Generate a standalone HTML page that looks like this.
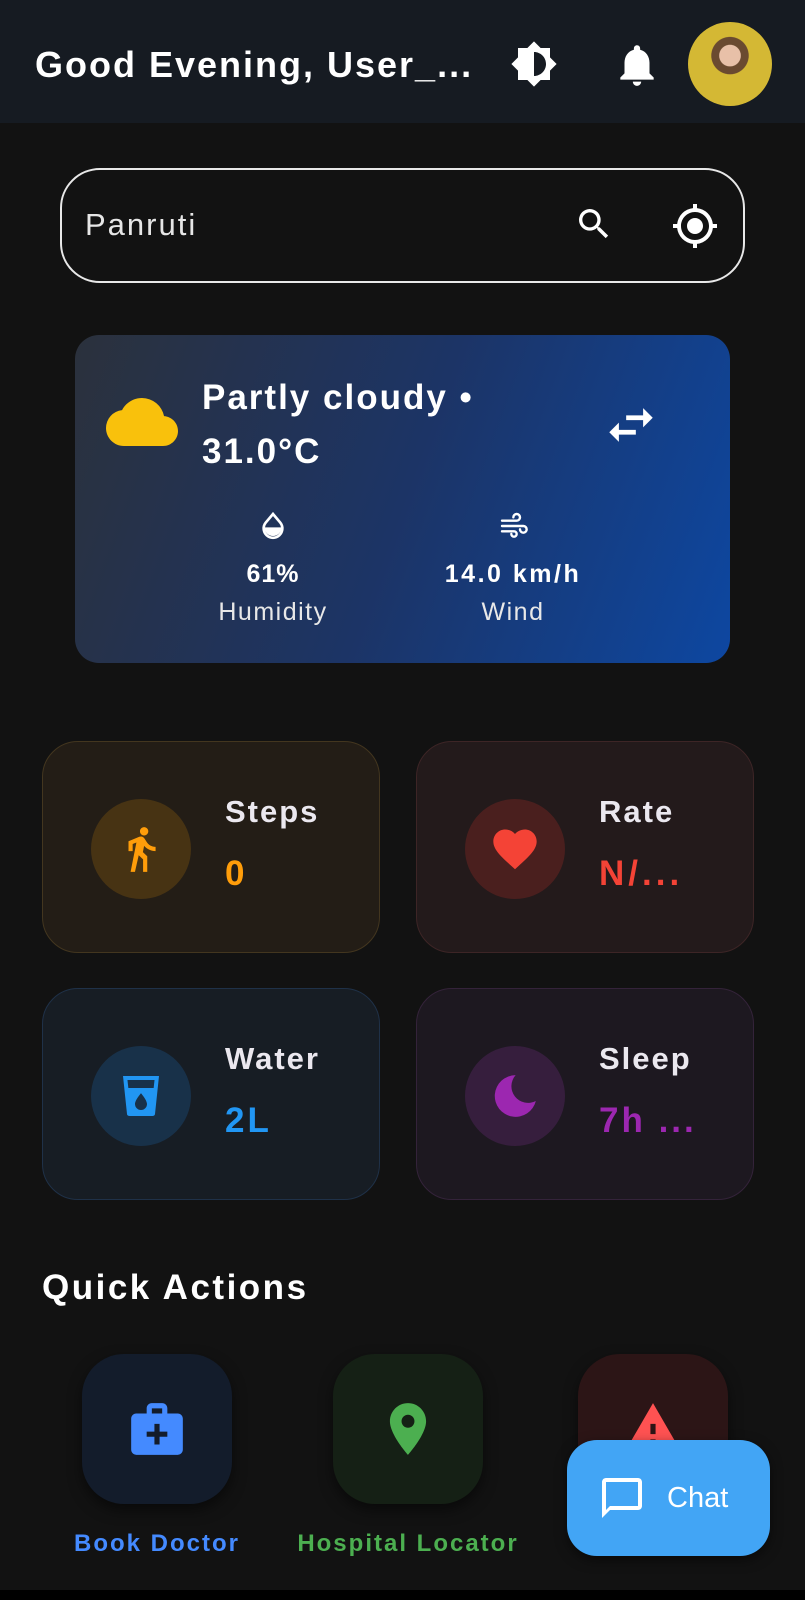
<!DOCTYPE html>
<html><head><meta charset="utf-8"><style>
*{margin:0;padding:0;box-sizing:border-box}
body{width:805px;height:1600px;background:#121212;position:relative;overflow:hidden;font-family:"Liberation Sans",sans-serif;color:#fff}
.abs{position:absolute}
.hdr{left:0;top:0;width:805px;height:123px;background:#161b22}
.title{left:35px;top:44px;font-size:36px;font-weight:bold;letter-spacing:2px;white-space:nowrap}
.search{left:60px;top:168px;width:685px;height:115px;border:2px solid #e8e8e8;border-radius:40px}
.wc{left:75px;top:335px;width:655px;height:328px;border-radius:24px;background:linear-gradient(110deg,#2b313c 0%,#1c3466 50%,#0d47a1 100%)}
.card{width:338px;height:212px;border-radius:36px}
.circ{width:100px;height:100px;border-radius:50%;left:48px;top:57px;display:flex;align-items:center;justify-content:center}
.lbl{left:182px;top:52px;font-size:31px;font-weight:bold;color:#ebe8ef;letter-spacing:2px}
.val{left:182px;top:112px;font-size:35px;font-weight:bold;letter-spacing:3px}
.tile{width:150px;height:150px;border-radius:42px;top:1354px;display:flex;align-items:center;justify-content:center;box-shadow:0 6px 14px rgba(0,0,0,.5)}
.ql{top:1530px;font-size:24px;font-weight:bold;text-align:center;letter-spacing:2px;white-space:nowrap}
</style></head><body>
<div class="abs hdr"></div>
<div class="abs title">Good Evening, User_...</div>
<svg class="abs" style="left:510px;top:40px" width="48" height="48" viewBox="0 0 24 24"><path fill="#fff" d="M20 8.69V4h-4.69L12 .69 8.69 4H4v4.69L.69 12 4 15.31V20h4.69L12 23.31 15.31 20H20v-4.69L23.31 12 20 8.69zM12 18V6c3.31 0 6 2.69 6 6s-2.69 6-6 6z"/></svg>
<svg class="abs" style="left:612px;top:40px" width="50" height="50" viewBox="0 0 24 24"><path fill="#fff" d="M12 22c1.1 0 2-.9 2-2h-4c0 1.1.9 2 2 2zm6-6v-5c0-3.07-1.63-5.64-4.5-6.32V4c0-.83-.67-1.5-1.5-1.5s-1.5.67-1.5 1.5v.68C7.64 5.36 6 7.92 6 11v5l-2 2v1h16v-1l-2-2z"/></svg>
<div class="abs" style="left:688px;top:22px;width:84px;height:84px;border-radius:50%;background:radial-gradient(circle at 50% 40%,#e8c0a8 0 16%,#6a4a30 17% 28%,#d4b834 29%)"></div>

<div class="abs search"></div>
<div class="abs" style="left:85px;top:207px;font-size:31px;color:#e6e6e6;letter-spacing:2px">Panruti</div>
<svg class="abs" style="left:574px;top:204px" width="40" height="40" viewBox="0 0 24 24"><path fill="#fff" d="M15.5 14h-.79l-.28-.27A6.47 6.47 0 0016 9.5 6.5 6.5 0 109.5 16c1.61 0 3.09-.59 4.23-1.57l.27.28v.79l5 4.99L20.49 19l-4.99-5zm-6 0C7.01 14 5 11.99 5 9.5S7.01 5 9.5 5 14 7.01 14 9.5 11.99 14 9.5 14z"/></svg>
<svg class="abs" style="left:671px;top:202px" width="48" height="48" viewBox="0 0 24 24"><path fill="#fff" d="M12 8c-2.21 0-4 1.79-4 4s1.79 4 4 4 4-1.79 4-4-1.79-4-4-4zm8.94 3A8.99 8.99 0 0013 3.06V1h-2v2.06A8.99 8.99 0 003.06 11H1v2h2.06A8.99 8.99 0 0011 20.94V23h2v-2.06A8.99 8.99 0 0020.94 13H23v-2h-2.06zM12 19c-3.87 0-7-3.13-7-7s3.13-7 7-7 7 3.13 7 7-3.13 7-7 7z"/></svg>

<div class="abs wc"></div>
<svg class="abs" style="left:106px;top:392px" width="72" height="60" viewBox="0 0 24 20"><path fill="#f9c10c" d="M19.35 8.04A7.49 7.49 0 0012 2C9.11 2 6.6 3.64 5.35 6.04A5.994 5.994 0 000 12c0 3.31 2.69 6 6 6h13c2.76 0 5-2.24 5-5 0-2.64-2.05-4.78-4.65-4.96z"/></svg>
<div class="abs" style="left:202px;top:371px;font-size:35px;font-weight:bold;line-height:54px;letter-spacing:2px">Partly cloudy •<br>31.0°C</div>
<svg class="abs" style="left:602px;top:396px" width="58" height="58" viewBox="0 0 24 24"><path fill="#fff" d="M6.99 11L3 15l3.99 4v-3H14v-2H6.99v-3zM21 9l-3.99-4v3H10v2h7.01v3L21 9z"/></svg>
<svg class="abs" style="left:257px;top:510px" width="32" height="32" viewBox="0 0 24 24"><path fill="none" stroke="#fff" stroke-width="2" d="M12 3L6.5 9.5a7 7 0 1011 0z"/><path fill="#fff" d="M5.5 13h13a6.5 6.5 0 01-13 0z"/></svg>
<svg class="abs" style="left:496px;top:510px" width="36" height="32" viewBox="0 0 24 24"><path fill="none" stroke="#fff" stroke-width="1.8" stroke-linecap="round" d="M3 8h11a2.5 2.5 0 10-2.5-2.5M3 12h16a2.5 2.5 0 11-2.5 2.5M3 16h9a2 2 0 11-2 2"/></svg>
<div class="abs" style="left:180px;top:560px;width:186px;text-align:center;font-size:25px;font-weight:bold;letter-spacing:1px">61%</div>
<div class="abs" style="left:180px;top:598px;width:186px;text-align:center;font-size:25px;color:#e8e8e8;letter-spacing:1.5px">Humidity</div>
<div class="abs" style="left:413px;top:560px;width:200px;text-align:center;font-size:25px;font-weight:bold;letter-spacing:2.5px">14.0 km/h</div>
<div class="abs" style="left:413px;top:598px;width:200px;text-align:center;font-size:25px;color:#e8e8e8;letter-spacing:1.5px">Wind</div>

<div class="abs card" style="left:42px;top:741px;background:#231d16;border:1.5px solid #43361f">
 <div class="abs circ" style="background:#473313"><svg width="50" height="50" viewBox="0 0 24 24"><path fill="#ff9d0a" d="M13.5 5.5c1.1 0 2-.9 2-2s-.9-2-2-2-2 .9-2 2 .9 2 2 2zM9.8 8.9L7 23h2.1l1.8-8 2.1 2v6h2v-7.5l-2.1-2 .6-3C14.8 12 16.8 13 19 13v-2c-1.9 0-3.5-1-4.3-2.4l-1-1.6c-.4-.6-1-1-1.7-1-.3 0-.5.1-.8.1L6 8.3V13h2V9.6l1.8-.7"/></svg></div>
 <div class="abs lbl">Steps</div><div class="abs val" style="color:#ff9d0a">0</div></div>
<div class="abs card" style="left:416px;top:741px;background:#231a1b;border:1.5px solid #3d2526">
 <div class="abs circ" style="background:#4a1f1e"><svg width="52" height="52" viewBox="0 0 24 24"><path fill="#f44336" d="M12 21.35l-1.45-1.32C5.4 15.36 2 12.28 2 8.5 2 5.42 4.42 3 7.5 3c1.74 0 3.41.81 4.5 2.09C13.09 3.81 14.76 3 16.5 3 19.58 3 22 5.42 22 8.5c0 3.78-3.4 6.86-8.55 11.54L12 21.35z"/></svg></div>
 <div class="abs lbl">Rate</div><div class="abs val" style="color:#f44336;letter-spacing:4px">N/...</div></div>
<div class="abs card" style="left:42px;top:988px;background:#171d24;border:1.5px solid #1f3148">
 <div class="abs circ" style="background:#183149"><svg width="48" height="48" viewBox="0 0 24 24"><path fill="#2196f3" d="M3 2l2 19c.1 1 1 1 2 1h10c1 0 1.9 0 2-1l2-19H3zm9 17a3 3 0 01-3-3c0-2 3-5.4 3-5.4s3 3.4 3 5.4a3 3 0 01-3 3zm6.33-11H5.67l-.44-4h13.53l-.43 4z"/></svg></div>
 <div class="abs lbl">Water</div><div class="abs val" style="color:#2196f3">2L</div></div>
<div class="abs card" style="left:416px;top:988px;background:#1d1820;border:1.5px solid #34233a">
 <div class="abs circ" style="background:#361e3d"><svg width="50" height="50" viewBox="0 0 24 24"><path fill="#9c27b0" d="M12.3 2a10 10 0 1 0 9.7 12.4A8 8 0 0 1 12.3 2z"/></svg></div>
 <div class="abs lbl">Sleep</div><div class="abs val" style="color:#9c27b0">7h ...</div></div>

<div class="abs" style="left:42px;top:1268px;font-size:35px;font-weight:bold;letter-spacing:2.5px">Quick Actions</div>
<div class="abs tile" style="left:82px;background:#131c2b"><svg width="62" height="62" viewBox="0 0 24 24"><path fill="#448aff" d="M20 6h-4V4c0-1.1-.9-2-2-2h-4c-1.1 0-2 .9-2 2v2H4c-1.1 0-2 .9-2 2v12c0 1.1.9 2 2 2h16c1.1 0 2-.9 2-2V8c0-1.1-.9-2-2-2zM10 4h4v2h-4V4zm6 11h-3v3h-2v-3H8v-2h3v-3h2v3h3v2z"/></svg></div>
<div class="abs tile" style="left:333px;background:#152015"><svg width="62" height="62" viewBox="0 0 24 24"><path fill="#4caf50" d="M12 2C8.13 2 5 5.13 5 9c0 5.25 7 13 7 13s7-7.75 7-13c0-3.87-3.13-7-7-7zm0 9.5a2.5 2.5 0 010-5 2.5 2.5 0 010 5z"/></svg></div>
<div class="abs tile" style="left:578px;background:#2c1516"><svg width="62" height="62" viewBox="0 0 24 24"><path fill="#ff5252" d="M1 21h22L12 2 1 21zm12-3h-2v-2h2v2zm0-4h-2v-4h2v4z"/></svg></div>
<div class="abs ql" style="left:57px;width:200px;color:#448aff">Book Doctor</div>
<div class="abs ql" style="left:273px;width:270px;color:#4caf50">Hospital Locator</div>
<div class="abs ql" style="left:553px;width:200px;color:#ff5252">Emergency</div>
<div class="abs" style="left:567px;top:1440px;width:203px;height:116px;border-radius:30px;background:#42a5f5;box-shadow:0 4px 12px rgba(0,0,0,.5)"></div>
<svg class="abs" style="left:598px;top:1474px" width="48" height="48" viewBox="0 0 24 24"><path fill="#fff" d="M20 2H4c-1.1 0-2 .9-2 2v18l4-4h14c1.1 0 2-.9 2-2V4c0-1.1-.9-2-2-2zm0 14H6l-2 2V4h16v12z"/></svg>
<div class="abs" style="left:667px;top:1482px;font-size:29px;color:#fff">Chat</div>
<div class="abs" style="left:0;top:1590px;width:805px;height:10px;background:#000"></div>
</body></html>
